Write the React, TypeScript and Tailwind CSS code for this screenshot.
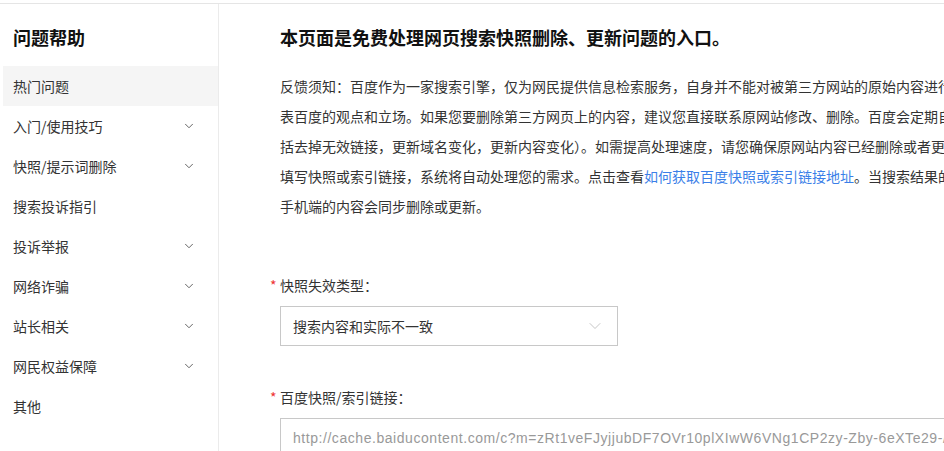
import { ChevronDown } from 'lucide-react';

const menu = [
  { label: '热门问题', active: true },
  { label: '入门/使用技巧', sub: true },
  { label: '快照/提示词删除', sub: true },
  { label: '搜索投诉指引' },
  { label: '投诉举报', sub: true },
  { label: '网络诈骗', sub: true },
  { label: '站长相关', sub: true },
  { label: '网民权益保障', sub: true },
  { label: '其他' },
];

function Sidebar() {
  return (
    <aside className="w-[219px] shrink-0 border-r border-[#ebebeb] pl-[3px]">
      <h2 className="pl-[10px] pt-[20px] pb-[16px] text-[18px] font-bold leading-[26px] text-[#111]">问题帮助</h2>
      <ul>
        {menu.map((item) => (
          <li
            key={item.label}
            className={`flex h-10 items-center justify-between pl-[10px] pr-[22px] text-[14px] text-[#333] ${item.active ? 'bg-[#f5f5f5]' : ''}`}
          >
            <span>{item.label}</span>
            {item.sub ? <ChevronDown size={14} strokeWidth={1.4} className="text-[#444]" /> : null}
          </li>
        ))}
      </ul>
    </aside>
  );
}

function Label({ text }: { text: string }) {
  return (
    <div className="flex items-center text-[14px] leading-[20px] text-[#333]">
      <span className="w-[10px] text-[#e33]">*</span>
      <span>{text}</span>
    </div>
  );
}

export default function App() {
  return (
    <div
      className="h-[451px] w-[944px] overflow-hidden bg-white"
      style={{ fontFamily: '"Noto Sans CJK SC", "Noto Sans", sans-serif' }}
    >
      <div className="mt-[3px] flex h-[448px] border-t border-[#e5e5e5]">
        <Sidebar />
        <main className="min-w-0 flex-1 overflow-hidden pl-[61px]">
          <h1 className="pt-[20px] text-[18px] font-bold leading-[26px] text-[#111]">
            本页面是免费处理网页搜索快照删除、更新问题的入口。
          </h1>
          <p className="mt-[21px] whitespace-nowrap text-[14px] leading-[30px] text-[#333]">
            反馈须知：百度作为一家搜索引擎，仅为网民提供信息检索服务，自身并不能对被第三方网站的原始内容进行修改或者删除，百度搜索结果中的内容不代
            <br />
            表百度的观点和立场。如果您要删除第三方网页上的内容，建议您直接联系原网站修改、删除。百度会定期自动更新所有网页快照（包
            <br />
            括去掉无效链接，更新域名变化，更新内容变化）。如需提高处理速度，请您确保原网站内容已经删除或者更新后，在下方
            <br />
            填写快照或索引链接，系统将自动处理您的需求。点击查看
            <a className="text-[#3b7fe8]" href="#">如何获取百度快照或索引链接地址</a>
            。当搜索结果的快照和索引更新后，
            <br />
            手机端的内容会同步删除或更新。
          </p>

          <div className="mt-[54px] -ml-[10px]">
            <Label text="快照失效类型：" />
            <div className="mt-[11px] ml-[10px] flex h-[40px] w-[338px] items-center justify-between border border-[#c8c8c8] pl-[12px] pr-[12px] text-[14px] text-[#333]">
              <span>搜索内容和实际不一致</span>
              <ChevronDown size={20} strokeWidth={1} className="text-[#bbb]" />
            </div>
          </div>

          <div className="mt-[41px] -ml-[10px]">
            <Label text="百度快照/索引链接：" />
            <div className="mt-[11px] ml-[10px] flex h-[40px] w-[800px] items-center border border-[#c8c8c8] pl-[12px] text-[14px] text-[#999]">
              <span
                className="whitespace-nowrap tracking-[0.55px]"
                style={{ fontFamily: '"Liberation Sans", Arial, sans-serif' }}
              >
                http://cache.baiducontent.com/c?m=zRt1veFJyjjubDF7OVr10plXIwW6VNg1CP2zy-Zby-6eXTe29-/
              </span>
            </div>
          </div>
        </main>
      </div>
    </div>
  );
}
